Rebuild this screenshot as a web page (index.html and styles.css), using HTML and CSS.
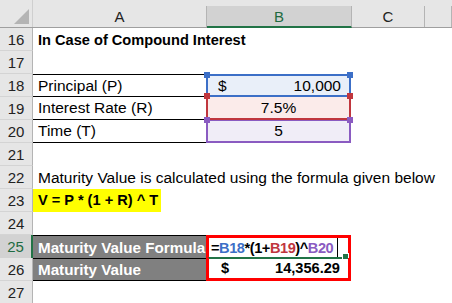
FILE: index.html
```html
<!DOCTYPE html>
<html lang="en">
<head>
    <meta charset="UTF-8">
    <title>Compound Interest</title>
    <link rel="stylesheet" href="styles.css">
</head>
<body>
    <div class="sheet">
        <div class="row head">
            <div class="corner"><span class="tri"></span></div>
            <div class="col">A</div>
            <div class="col sel">B</div>
            <div class="col">C</div>
            <div class="col"></div>
        </div>

        <div class="row">
            <div class="num">16</div>
            <div class="cell bold">In Case of Compound Interest</div>
            <div class="cell"></div><div class="cell"></div><div class="cell"></div>
        </div>
        <div class="row">
            <div class="num">17</div>
            <div class="cell"></div><div class="cell"></div><div class="cell"></div><div class="cell"></div>
        </div>
        <div class="row">
            <div class="num">18</div>
            <div class="cell lined top">Principal (P)</div>
            <div class="cell ref blue money"><span>$</span><span>10,000</span></div>
            <div class="cell"></div><div class="cell"></div>
        </div>
        <div class="row">
            <div class="num">19</div>
            <div class="cell lined">Interest Rate (R)</div>
            <div class="cell ref red center">7.5%</div>
            <div class="cell"></div><div class="cell"></div>
        </div>
        <div class="row">
            <div class="num">20</div>
            <div class="cell lined">Time (T)</div>
            <div class="cell ref purple center">5</div>
            <div class="cell"></div><div class="cell"></div>
        </div>
        <div class="row">
            <div class="num">21</div>
            <div class="cell"></div><div class="cell"></div><div class="cell"></div><div class="cell"></div>
        </div>
        <div class="row">
            <div class="num">22</div>
            <div class="cell wide">Maturity Value is calculated using the formula given below</div>
        </div>
        <div class="row">
            <div class="num">23</div>
            <div class="cell bold"><span class="mark">V = P * (1 + R) ^ T</span></div>
            <div class="cell"></div><div class="cell"></div><div class="cell"></div>
        </div>
        <div class="row">
            <div class="num">24</div>
            <div class="cell"></div><div class="cell"></div><div class="cell"></div><div class="cell"></div>
        </div>

        <div class="row">
            <div class="num active">25</div>
            <div class="cell dark">Maturity Value Formula</div>
            <div class="cell out bold formula">=<b class="f-blue">B18</b>*(1+<b class="f-red">B19</b>)^<b class="f-purple">B20</b><i class="caret"></i></div>
            <div class="cell"></div><div class="cell"></div>
        </div>
        <div class="row">
            <div class="num">26</div>
            <div class="cell dark">Maturity Value</div>
            <div class="cell out bottom bold money result"><span>$</span><span>14,356.29</span></div>
            <div class="cell"></div><div class="cell"></div>
        </div>
        <div class="row">
            <div class="num">27</div>
            <div class="cell"></div><div class="cell"></div><div class="cell"></div><div class="cell"></div>
        </div>
    </div>
</body>
</html>
```

FILE: styles.css
```css
body { margin: 0; background: #fff; font-family: "Liberation Sans", Arial, sans-serif; font-size: 15.5px; color: #000; }
.sheet { width: 452px; height: 303px; overflow: hidden; }
.row { display: grid; grid-template-columns: 33px 174px 145px 73px 1fr; height: 23px; }
.row.head { height: 28px; background: #e6e6e6; border-bottom: 1px solid #9f9f9f; box-sizing: border-box; }

.corner { position: relative; border-right: 1px solid #cfcfcf; }
.tri { position: absolute; right: 3px; bottom: 3px; width: 0; height: 0; border-left: 15px solid transparent; border-bottom: 15px solid #b4b4b4; }
.col { display: flex; align-items: center; justify-content: center; margin-top: 6px; border-right: 1px solid #b4b4b4; color: #222; font-size: 15px; }
.col.sel { background: #d2d2d2; border-bottom: 2px solid #217346; color: #1e6b41; margin-bottom: -1px; }

.num { display: flex; align-items: center; justify-content: center; background: #e6e6e6; border-right: 1px solid #b4b4b4; border-bottom: 1px solid #d4d4d4; box-sizing: border-box; color: #222; font-size: 15px; }
.num.active { background: #d2d2d2; color: #1e6b41; border-right: 2px solid #217346; }

.cell { display: flex; align-items: center; padding: 0 5px; white-space: nowrap; box-sizing: border-box; position: relative; }
.cell.wide { grid-column: 2 / 6; }
.bold { font-weight: bold; font-size: 14.6px; }
.center { justify-content: center; }
.money { justify-content: space-between; padding: 0 8px 0 10px; }

.lined { border-bottom: 1px solid #000; }
.lined.top { border-top: 1px solid #000; }

.mark { background: #ffff00; margin-left: -5px; padding: 0 3px 0 5px; line-height: 23px; }

.ref { border: 2px solid; border-top-width: 1px; margin-left: -1px; margin-right: 1px; }
.ref.blue { border-color: #3c6fc7; background: #e9eff9; border-top-width: 2px; }
.ref.red { border-color: #c0363e; background: #fbebea; border-top: 0; }
.ref.purple { border-color: #8a5bc1; background: #f0edf7; }
.ref::before, .ref::after { content: ""; position: absolute; width: 6px; height: 6px; top: -4px; }
.ref::before { left: -4px; }
.ref::after { right: -4px; }
.ref.blue::before, .ref.blue::after { background: #3c6fc7; }
.ref.red::before, .ref.red::after { background: #c0363e; }
.ref.purple::before, .ref.purple::after { background: #8a5bc1; }

.dark { background: #808080; color: #fff; font-weight: bold; font-size: 15.2px; border-top: 1px solid #000; border-bottom: 1px solid #000; }
.out { border: 3px solid #ff0000; border-bottom: 0; margin-left: -1px; margin-right: 1px; padding-left: 2px; }
.out.bottom { border-top: 0; border-bottom: 3px solid #ff0000; }
.result { padding-left: 12px; }
.formula { border-bottom: 2px solid #217346; letter-spacing: -0.45px; }
.formula::after { content: ""; position: absolute; right: -1px; bottom: -3px; width: 5px; height: 5px; background: #217346; border: 1px solid #fff; }
.f-blue { color: #3c6fc7; }
.f-red { color: #c0363e; }
.f-purple { color: #8a5bc1; }
.caret { display: inline-block; width: 1px; height: 19px; background: #000; margin-left: 4px; }
```
